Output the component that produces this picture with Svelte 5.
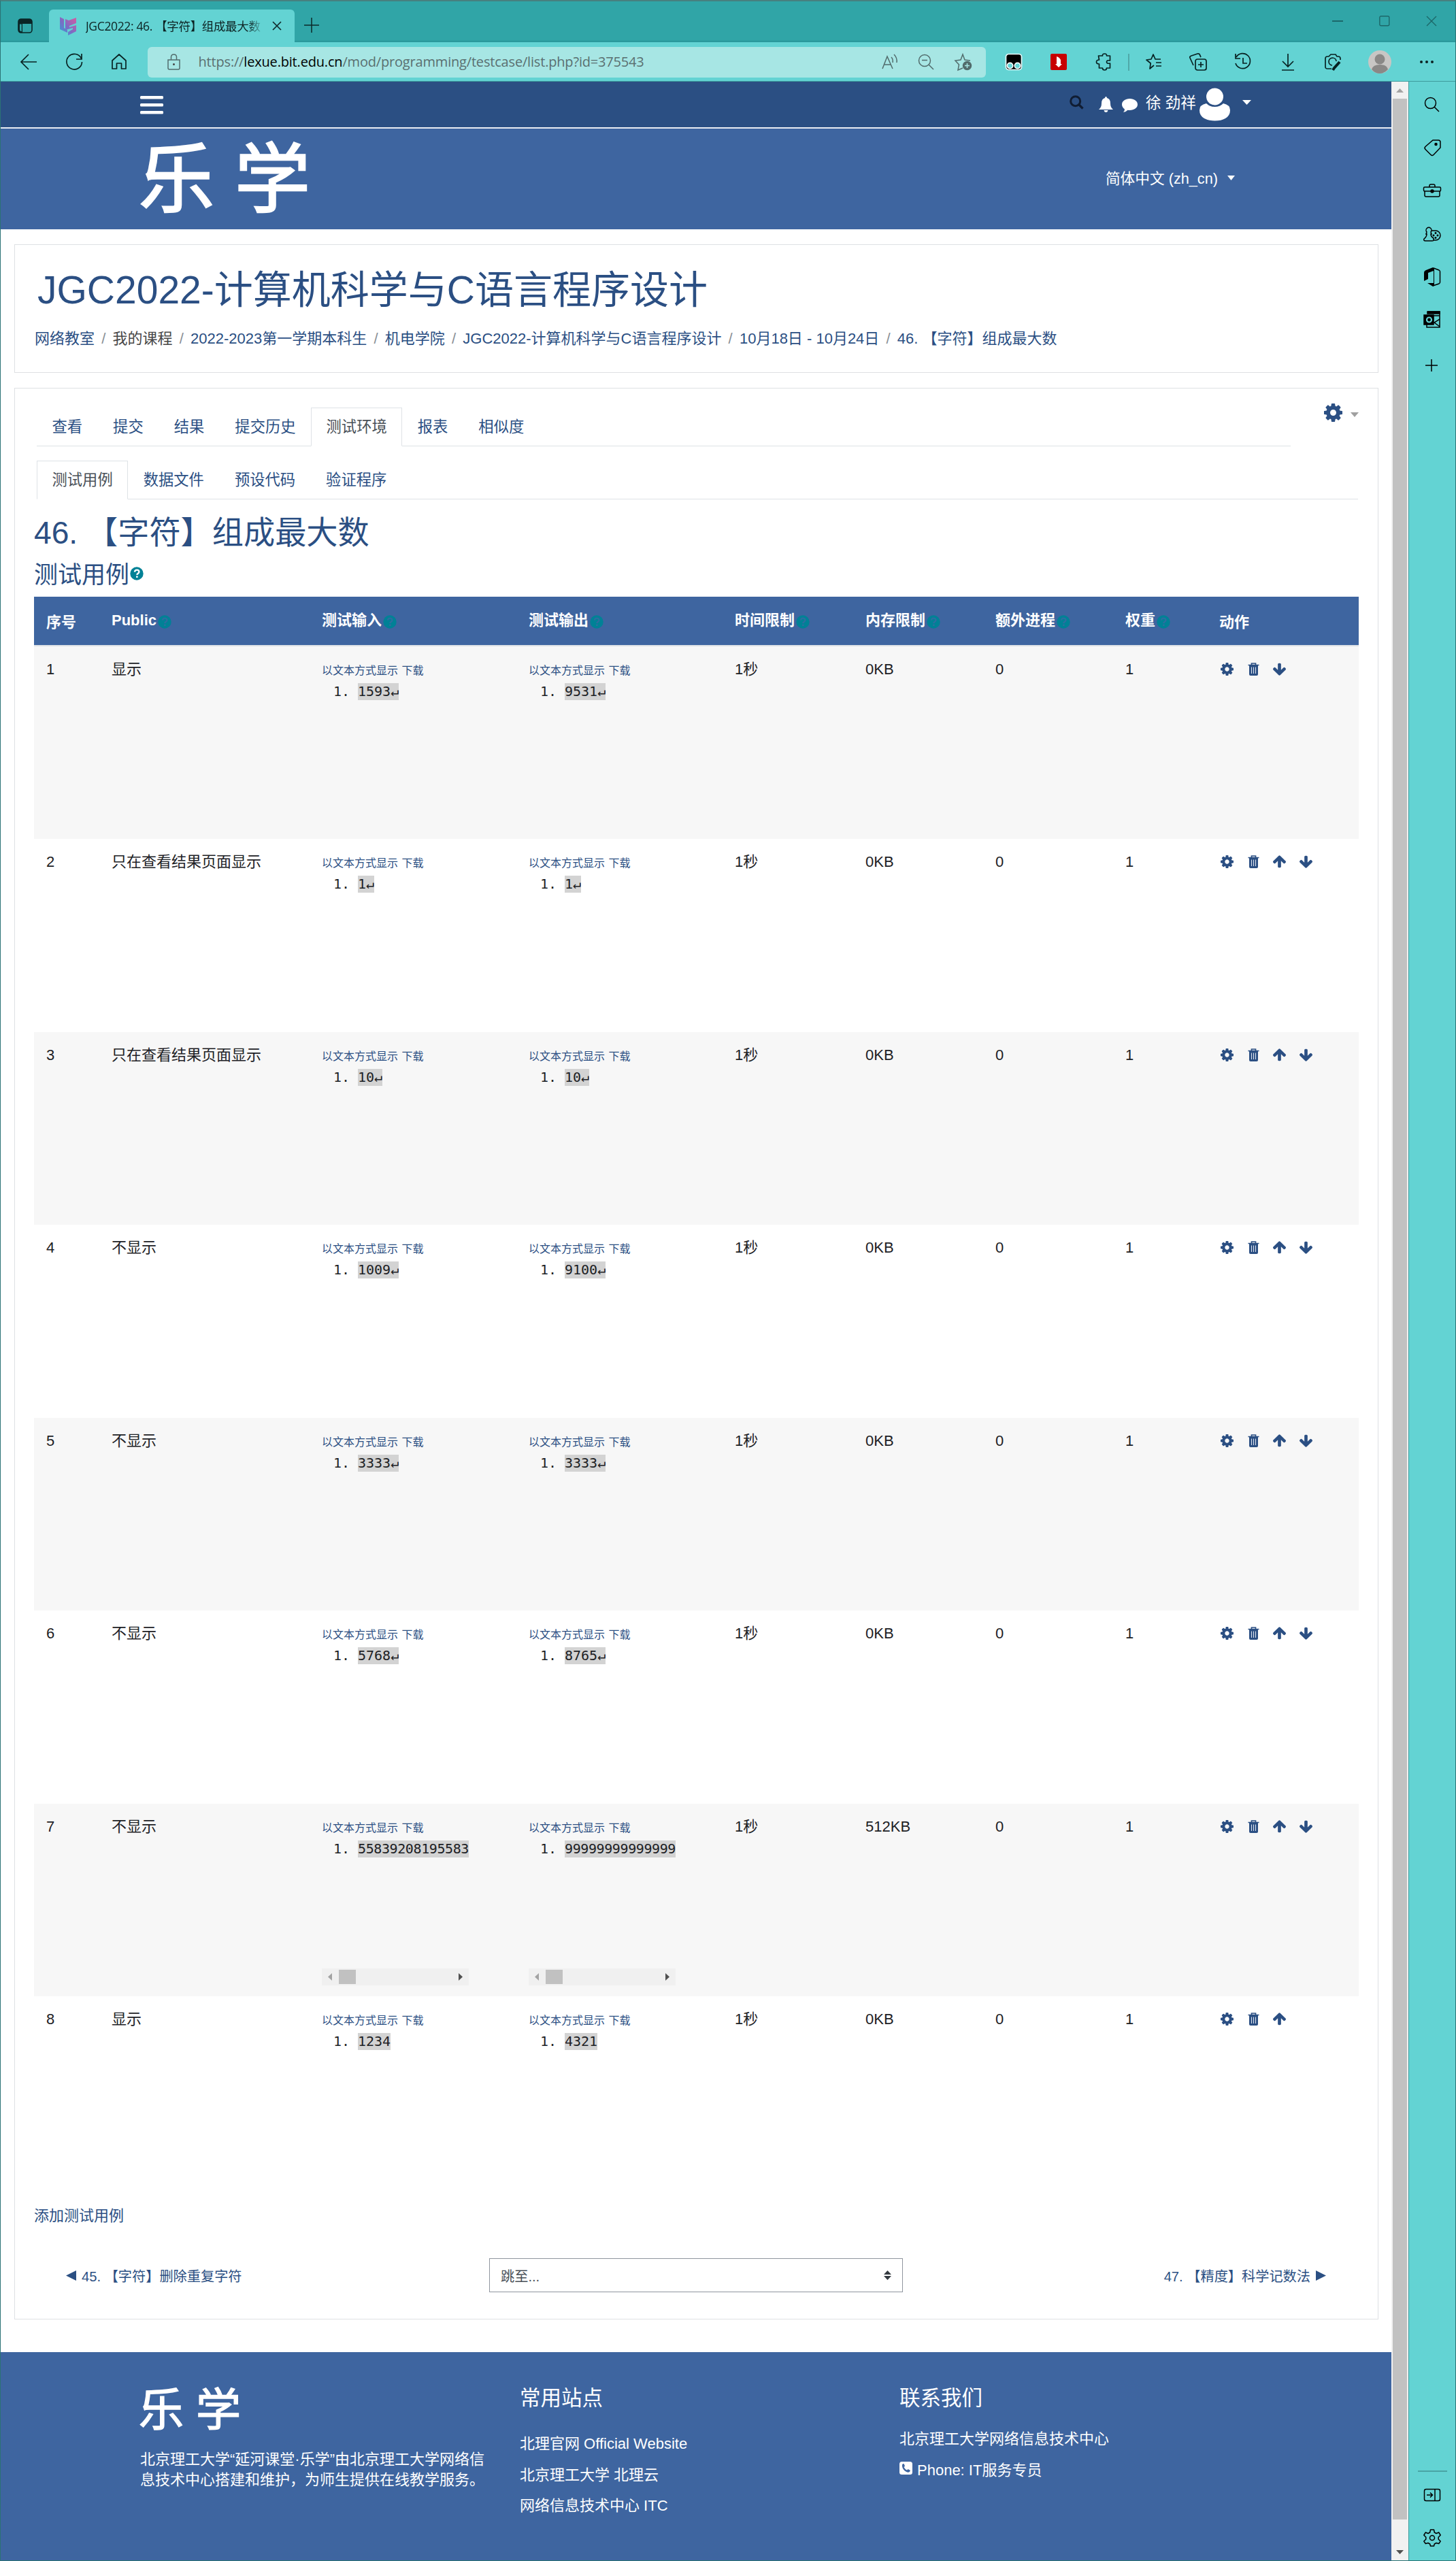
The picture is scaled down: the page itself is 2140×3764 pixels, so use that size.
<script>
  const breadcrumbs = [
    '网络教室', '我的课程', '2022-2023第一学期本科生', '机电学院',
    'JGC2022-计算机科学与C语言程序设计', '10月18日 - 10月24日', '46. 【字符】组成最大数'
  ];
  const mainTabs = ['查看', '提交', '结果', '提交历史', '测试环境', '报表', '相似度'];
  const subTabs = ['测试用例', '数据文件', '预设代码', '验证程序'];
  const columns = [
    ['序号', false], ['Public', true], ['测试输入', true], ['测试输出', true], ['时间限制', true],
    ['内存限制', true], ['额外进程', true], ['权重', true], ['动作', false]
  ];
  const rows = [
    { vis: '显示', input: '1593↵', output: '9531↵', mem: '0KB' },
    { vis: '只在查看结果页面显示', input: '1↵', output: '1↵', mem: '0KB' },
    { vis: '只在查看结果页面显示', input: '10↵', output: '10↵', mem: '0KB' },
    { vis: '不显示', input: '1009↵', output: '9100↵', mem: '0KB' },
    { vis: '不显示', input: '3333↵', output: '3333↵', mem: '0KB' },
    { vis: '不显示', input: '5768↵', output: '8765↵', mem: '0KB' },
    { vis: '不显示', input: '55839208195583', output: '99999999999999', mem: '512KB', scroll: true },
    { vis: '显示', input: '1234', output: '4321', mem: '0KB' }
  ];
</script>

{#snippet cog(size)}
  <svg width={size} height={size} viewBox="0 -128 1536 1536" fill="currentColor"><path d="M1024 640q0-106-75-181t-181-75-181 75-75 181 75 181 181 75 181-75 75-181zm512-109v222q0 12-8 23t-20 13l-185 28q-19 54-39 91 35 50 107 138 10 12 10 25t-9 23q-27 37-99 108t-94 71q-12 0-26-9l-138-108q-44 23-91 38-16 136-29 186-7 28-36 28h-222q-14 0-24.500-8.500t-11.500-21.500l-28-184q-49-16-90-37l-141 107q-10 9-25 9-14 0-25-11-126-114-165-168-7-10-7-23 0-12 8-23 15-21 51-66.500t54-70.500q-27-50-41-99l-183-27q-13-2-21-12.500t-8-23.500v-222q0-12 8-23t19-13l186-28q14-46 39-92-40-57-107-138-10-12-10-24 0-10 9-23 26-36 98.500-107.500t94.500-71.500q13 0 26 10l138 107q44-23 91-38 16-136 29-186 7-28 36-28h222q14 0 24.500 8.500t11.500 21.500l28 184q49 16 90 37l142-107q9-9 24-9 13 0 25 10 129 119 165 170 7 8 7 22 0 12-8 23-15 21-51 66.500t-54 70.500q26 50 41 98l183 28q13 2 21 12.500t8 23.500z" /></svg>
{/snippet}
{#snippet arrow(up)}
  <svg class:up width="19" height="19" viewBox="53 90 1558 1520" fill="currentColor"><path d="M1611 832q0 53-37 90l-651 652q-39 37-91 37-53 0-90-37l-651-652q-38-36-38-90 0-53 38-91l74-75q39-37 91-37 53 0 90 37l294 294v-704q0-52 38-90t90-38h128q52 0 90 38t38 90v704l294-294q37-37 90-37 52 0 91 37l75 75q37 39 37 91z" /></svg>
{/snippet}
{#snippet help()}
  <svg class="help" width="20" height="20" viewBox="0 0 20 20"><circle cx="10" cy="10" r="9.700" fill="#008196" /><path class="qm" d="M6.900 7.600C7.200 5.400 8.500 4.600 10.200 4.600c1.900 0 3.200 1.100 3.200 2.800 0 2.500-3 2.300-3 4.600" fill="none" stroke-width="2.400" /><rect class="qd" x="9.100" y="13.500" width="2.500" height="2.500" /></svg>
{/snippet}
{#snippet code(text, scroll)}
  <div class="code-cell">
    <div class="code-links"><a>以文本方式显示</a> <a>下载</a></div>
    <div class="code-line" class:wide={scroll}><span>1.</span><mark>{text}</mark></div>
    {#if scroll}
      <div class="hscroll">
        <svg width="25" height="25"><path d="M15 7v11l-6-5.500z" fill="#a3a3a3" /></svg>
        <i></i>
        <svg width="25" height="25"><path d="M10 7v11l6-5.500z" fill="#505050" /></svg>
      </div>
    {/if}
  </div>
{/snippet}

<div class="window">
  <div class="tabstrip">
    <svg class="ws" width="22" height="22" viewBox="0 0 22 22"><rect x="1" y="1" width="20" height="20" rx="4" fill="none" stroke="#0a2425" stroke-width="1.600" /><path d="M1 8V5q0-4 4-4h12q4 0 4 4v3H7v13H5q-4 0-4-4z" fill="#0a2425" /><path d="M3 8.500h2.800v10.800q-2.800 0-2.800-3z" fill="#30a5a7" /></svg>
    <div class="tab">
      <svg width="25" height="26" viewBox="0 0 25 26"><defs><linearGradient id="fav" x1="0" y1="1" x2="1" y2="0"><stop offset="0" stop-color="#28a6d8" /><stop offset=".45" stop-color="#7c6bc4" /><stop offset="1" stop-color="#d85aa0" /></linearGradient></defs><path d="M0 0l6 3v13l5 3v4L0 18zM8 3l5 2 11-4v8l-10 4v2l10-3v9l-12 6v-5l7-4v-2l-11 3z" fill="url(#fav)" /></svg>
      <span class="tab-title">JGC2022: 46. 【字符】组成最大数</span>
      <svg width="14" height="14"><path d="M1 1l12 12M13 1L1 13" stroke="#102a2b" stroke-width="1.700" /></svg>
    </div>
    <svg class="newtab" width="22" height="22"><path d="M11 0v22M0 11h22" stroke="#0b2829" stroke-width="1.500" /></svg>
    <div class="controls">
      <svg width="16" height="16"><path d="M0 8h16" stroke="#17595b" stroke-width="1.600" /></svg>
      <svg width="16" height="16"><rect x=".8" y=".8" width="14" height="14" rx="2" fill="none" stroke="#1c6769" stroke-width="1.400" /></svg>
      <svg width="16" height="16"><path d="M1 1l14 14M15 1L1 15" stroke="#1c6769" stroke-width="1.400" /></svg>
    </div>
  </div>

  <div class="toolbar">
    <svg class="nav" viewBox="0 0 24 24"><path d="M24 12H1M12 1L1 12l11 11" /></svg>
    <svg class="nav" viewBox="0 0 24 24"><path d="M22.500 7A11.300 11.300 0 1 0 23.500 12M23 0v8h-8" /></svg>
    <svg class="nav" viewBox="0 0 24 24"><path d="M2 10L12 1l10 9v12h-6.500v-8h-7v8H2z" stroke-linejoin="round" /></svg>
    <div class="address">
      <svg class="lock" width="19" height="24" viewBox="0 0 19 24"><path d="M1 9h17v12q0 2-2 2H3q-2 0-2-2zM5.500 9V5q0-4 4-4t4 4v4" fill="none" stroke="#526c6c" stroke-width="1.500" /><circle cx="9.500" cy="15.500" r="1.500" fill="#444" /></svg>
      <span class="url">https://<b>lexue.bit.edu.cn</b>/mod/programming/testcase/list.php?id=375543</span>
      <div class="addr-icons">
        <svg viewBox="0 0 24 24"><path d="M1 22L8 4l8 18M4 16h9M14 5q3 3 2 8M18 1q5 5 4 12" /></svg>
        <svg viewBox="0 0 24 24"><circle cx="10" cy="10" r="8.500" /><path d="M16 16l7 7M6 9.500h8" /></svg>
        <svg viewBox="0 0 24 24"><path d="M12 21l-7 3 1.500-8L1 10l8-1 3-8 3 8 8 1" /><circle cx="18.500" cy="17.500" r="6" fill="#526c6c" /><path d="M18.500 14v7M15 17.500h7" stroke="#a7e6e4" /></svg>
      </div>
    </div>
    <div class="tools">
      <svg viewBox="0 0 24 24"><rect x=".5" y=".5" width="23" height="23" rx="4" fill="#000" stroke="#e8fafa" /><circle cx="6.500" cy="17.500" r="4.200" fill="#63d3d3" stroke="#fff" /><circle cx="17.500" cy="17.500" r="4.200" fill="#63d3d3" stroke="#fff" /></svg>
      <svg viewBox="0 0 24 24"><rect width="24" height="24" rx="2" fill="#c80000" stroke="none" /><path d="M9 4q4 1 6 5v6h2l-5 5-5-5h2z" fill="#fff" stroke="none" /></svg>
      <svg viewBox="0 0 24 24"><path d="M3 3h6q-.5-3 3-3t3 3h5v7q-5-1-5 2t5 2v7h-5q0 3-3 3t-3-3H4v-6q-4 0-4-3t4-3z" transform="translate(1.500 0)" stroke-linejoin="round" /></svg>
      <i class="sep"></i>
      <svg viewBox="0 0 24 24"><path d="M13 17l-6 5 1.200-8L2 9l7-1 3-7 3 7h8M16 13h8M16 18h8" stroke-linejoin="round" /></svg>
      <svg viewBox="0 0 24 24"><rect x="8" y="8" width="16" height="16" rx="3" /><path d="M16 12v8M12 16h8M5 17L0 6q-1-2 2-3l9-3q3-1 4 3l1 2" /></svg>
      <svg viewBox="0 0 24 24"><path d="M2 5a11 11 0 1 1-1 9M1 0v7h7M12 6v8h6" /></svg>
      <svg viewBox="0 0 24 24"><path d="M12 0v19M4 11l8 8 8-8M3 24h18" /></svg>
      <svg viewBox="0 0 24 24"><path d="M10 22H4q-3 0-3-3V7q0-3 3-3h2l3-3h7l2 3h2q3 0 3 3v2M11 17a5.500 5.500 0 1 1 6-6" /><path d="M22 12l-8 9-2 3" stroke-width="4" /></svg>
      <svg class="me" viewBox="0 0 34 34"><circle cx="17" cy="17" r="17" fill="#c8c6c4" stroke="none" /><circle cx="17" cy="13" r="7.500" fill="#8a8886" stroke="none" /><path d="M5 28q2-7 12-7t12 7q-5 6-12 6T5 28" fill="#8a8886" stroke="none" /></svg>
      <svg viewBox="0 0 24 24"><g fill="#0b2222" stroke="none"><circle cx="4" cy="12" r="2" /><circle cx="12" cy="12" r="2" /><circle cx="20" cy="12" r="2" /></g></svg>
    </div>
  </div>

  <div class="body">
    <div class="page">
      <nav class="topnav">
        <svg width="34" height="27"><g fill="#fff"><rect width="34" height="4.500" rx="1.500" /><rect y="11" width="34" height="4.500" rx="1.500" /><rect y="22" width="34" height="4.500" rx="1.500" /></g></svg>
        <div class="user">
          <svg class="find" width="21" height="21"><circle cx="8.700" cy="8.700" r="7" fill="none" stroke="#101d33" stroke-width="3" /><path d="M13.500 13.500l6 6" stroke="#101d33" stroke-width="3.200" /></svg>
          <svg class="bell" width="21" height="23"><path d="M10.500 0q1.500 0 1.500 2 5 1 5 8 0 6 4 9H0q4-3 4-9 0-7 5-8 0-2 1.500-2zM7.500 20h6q-.5 3-3 3t-3-3z" fill="#fff" /></svg>
          <svg class="chat" width="23" height="20"><path d="M11.500 0C18 0 23 3.600 23 8.500S18 17 11.500 17q-1.500 0-3-.3Q6 19.500 2 20q2-2 2-4.500-4-3-4-7C0 3.600 5 0 11.500 0z" fill="#fff" /></svg>
          <span>徐 劲祥</span>
          <svg class="face" width="46" height="48"><circle cx="22.500" cy="12" r="12.500" fill="#fff" /><path d="M10 22q5 5 12.500 5T35 22q10 2 10 10 0 8-7 12-6 3.500-15.500 3.500T7 44q-7-4-7-12 0-8 10-10z" fill="#fff" /></svg>
          <svg class="caret" width="13" height="7"><path d="M0 0h13l-6.500 7z" fill="#fff" /></svg>
        </div>
      </nav>
      <header class="banner">
        <div class="logo">乐<span>学</span></div>
        <div class="lang">简体中文 (zh_cn)<svg width="11" height="7"><path d="M0 0h11l-5.500 7z" fill="#fff" /></svg></div>
      </header>

      <section class="card course">
        <h1>JGC2022-计算机科学与C语言程序设计</h1>
        <ol>
          {#each breadcrumbs as crumb, i}
            <li class:plain={i === 1}>{crumb}</li>
          {/each}
        </ol>
      </section>

      <section class="card main">
        <div class="tabs-row">
          <ul class="tabs">
            {#each mainTabs as t, i}<li class:active={i === 4}>{t}</li>{/each}
          </ul>
          <div class="settings">{@render cog(27)}<svg width="12" height="7"><path d="M0 0h12L6 7z" fill="#a0a0a0" /></svg></div>
        </div>
        <ul class="tabs sub">
          {#each subTabs as t, i}<li class:active={i === 0}>{t}</li>{/each}
        </ul>
        <h2>46. 【字符】组成最大数</h2>
        <h3>测试用例{@render help()}</h3>

        <div class="table">
          <div class="tr head">
            {#each columns as [label, hasHelp]}
              <div class:low={!hasHelp}>{label}{#if hasHelp}{@render help()}{/if}</div>
            {/each}
          </div>
          {#each rows as r, i}
            <div class="tr">
              <div>{i + 1}</div>
              <div>{r.vis}</div>
              {@render code(r.input, r.scroll)}
              {@render code(r.output, r.scroll)}
              <div>1秒</div>
              <div>{r.mem}</div>
              <div>0</div>
              <div>1</div>
              <div class="actions">
                {@render cog(19)}
                <svg width="19" height="19"><path d="M1.500 3.500h16M6.500 3V1h6v2" fill="none" stroke="currentColor" stroke-width="1.700" /><path d="M3 4h13v13q0 2-2 2H5q-2 0-2-2z" fill="currentColor" /><path d="M6.500 6.500v9.500M9.500 6.500v9.500M12.500 6.500v9.500" stroke="#dce3ee" stroke-width="1.100" /></svg>
                {#if i > 0}{@render arrow(true)}{/if}
                {#if i < rows.length - 1}{@render arrow(false)}{/if}
              </div>
            </div>
          {/each}
        </div>

        <a class="add">添加测试用例</a>
        <div class="pager">
          <a><svg width="15" height="15"><path d="M15 0v15L0 7.500z" fill="currentColor" /></svg><span>45. 【字符】删除重复字符</span></a>
          <div class="select"><span>跳至...</span><svg width="11" height="14"><path d="M0 6l5.500-6L11 6zM0 8h11l-5.500 6z" fill="#343a40" /></svg></div>
          <a><span>47. 【精度】科学记数法</span><svg width="15" height="15"><path d="M0 0v15l15-7.500z" fill="currentColor" /></svg></a>
        </div>
      </section>

      <footer>
        <div class="f1">
          <div class="logo small">乐<span>学</span></div>
          <p>北京理工大学“延河课堂·乐学”由北京理工大学网络信<br />息技术中心搭建和维护，为师生提供在线教学服务。</p>
        </div>
        <div class="f2">
          <h5>常用站点</h5>
          <a>北理官网 Official Website</a>
          <a>北京理工大学 北理云</a>
          <a>网络信息技术中心 ITC</a>
        </div>
        <div class="f3">
          <h5>联系我们</h5>
          <a>北京理工大学网络信息技术中心</a>
          <a><svg width="19" height="19"><rect width="19" height="19" rx="3.500" fill="#fff" /><path d="M4 4.500q2-2.500 3-.5l1 2.500-1.500 1.500q1.500 3 4.500 4.500l1.500-1.500 3 1.500q1 1-1 2.700-3 1.500-7-2T4 4.500z" fill="#3e65a0" /></svg>Phone: IT服务专员</a>
        </div>
      </footer>
    </div>

    <div class="vscroll">
      <svg width="25" height="25"><path d="M7 16h11l-5.500-6z" fill="#a3a3a3" /></svg>
      <i></i>
      <svg class="dn" width="25" height="25"><path d="M7 10h11l-5.500 6z" fill="#505050" /></svg>
    </div>

    <aside>
      <svg viewBox="0 0 26 26"><circle cx="10.500" cy="10.500" r="8" /><path d="M16 16l7 7" /></svg>
      <svg viewBox="0 0 26 26"><path d="M14 2h8q3 0 3 3v8L15 23.500q-2 2-4 0l-8-8q-2-2 0-4z" /><circle cx="18.500" cy="8" r="1.500" fill="#000" /></svg>
      <svg viewBox="0 0 26 26"><rect x=".5" y="7" width="25" height="6" rx="1.500" /><path d="M2 13v6q0 2 2 2h18q2 0 2-2v-6M9 7V5q0-2 2-2h4q2 0 2 2v2" /><circle cx="13" cy="13" r="2" fill="#000" /></svg>
      <svg viewBox="0 0 26 26"><path d="M5 10a4 4 0 1 1 6 0l1 3h-1q0 4 4 6v3q0 1-2 1H3q-3 0-2-3 4-3 4-7H4zM12 8h6a7 7 0 0 1 0 14h-3" /><g fill="#000" stroke-width=".6"><circle cx="18" cy="11.500" r="1.200" /><circle cx="15" cy="15" r="1.200" /><circle cx="21" cy="15" r="1.200" /><circle cx="18" cy="18.500" r="1.200" /></g></svg>
      <svg viewBox="0 0 26 26"><path d="M14 -1L4 3Q1 4 1 7v12l6-3V7l8-3v18H6l8 5 2-1V0z" fill="#000" stroke="none" /><path d="M15 0l8 3q1.500 1 1.500 2v16q0 1-1.500 2l-9 3" /></svg>
      <svg viewBox="0 0 26 26"><path d="M6 1h18v11M15 7h9M5 20v4h19V12l-8 5 8 6" /><path d="M6 1h18v3H6zM1 6h14v14H1z" fill="#000" /><circle cx="8.500" cy="13" r="3.500" fill="#000" stroke="#63d3d3" stroke-width="2.200" /></svg>
      <svg class="plus" viewBox="0 0 26 26"><path d="M12 4v18M3 13h18" /></svg>
      <i></i>
      <svg viewBox="0 0 26 26"><rect x="1.500" y="4.500" width="23" height="17" rx="2.500" /><path d="M17 5v16M5 13h8M10 9.500l3.500 3.500-3.500 3.500" /></svg>
      <svg class="gear" viewBox="0 0 26 26"><path d="M10.500 1h5l.8 4 2.700 1.500 3.700-1.500 2.500 4-3 3v3l3 3-2.500 3.500-3.700-1-2.700 1.500-.8 3h-5l-.8-3L7 20.500l-3.700 1L.8 18l3-3v-3l-3-3 2.500-4L7 6.500 9.700 5z" stroke-linejoin="round" /><circle cx="13" cy="13" r="3.500" /></svg>
    </aside>
  </div>
</div>

<style>
  :global(body) { margin: 0; background: #fff; }
  .window {
    box-sizing: border-box; width: 2140px; height: 3764px; overflow: hidden;
    display: flex; flex-direction: column;
    border: 1px solid #2b7375; border-top: 2px solid #47807f;
    font-family: "Liberation Sans", "Noto Sans CJK SC", sans-serif;
    font-size: 22.5px; color: #1d2125; background: #fff;
  }
  .window * { box-sizing: border-box; }
  svg { flex: none; display: block; overflow: visible; }
  ul, ol, p, h1, h2, h3, h5 { margin: 0; padding: 0; list-style: none; font-weight: 400; }

  .tabstrip { display: flex; height: 60px; flex: none; background: #30a5a7; box-shadow: inset 0 -2px 2px #2b979a; }
  .ws { margin: 25px 24px 0 25px; }
  .tab { width: 361px; margin-top: 12px; padding: 0 18px 0 16px; border-radius: 6px 6px 0 0; background: #63d3d3; display: flex; align-items: center; }
  .tab-title {
    flex: none; width: 261px; margin: 0 13px 0 13px; overflow: hidden; white-space: nowrap;
    font: 17.500px/28px "Open Sans", "Noto Sans CJK SC", sans-serif; letter-spacing: -0.35px; color: #0d2323;
    -webkit-mask-image: linear-gradient(90deg, #000 92%, transparent);
    mask-image: linear-gradient(90deg, #000 92%, transparent);
  }
  .newtab { margin: 24px 0 0 14px; }
  .controls { margin-left: auto; display: flex; margin-right: 1px; }
  .controls svg { margin: 21px 26.500px 0; }

  .toolbar { display: flex; align-items: center; height: 58px; flex: none; padding-left: 29px; background: #63d3d3; border-bottom: 1px solid #3e9b9c; }
  .nav { width: 24px; height: 24px; margin-right: 42.500px; fill: none; stroke: #082222; stroke-width: 1.700; }
  .address { flex: none; width: 1232px; height: 45px; margin-left: -13px; margin-top: 1px; padding-left: 29px; border-radius: 6px; background: #a7e6e4; display: flex; align-items: center; }
  .url { margin-left: 27px; white-space: nowrap; font: 20px/40px "Open Sans", sans-serif; letter-spacing: -0.18px; color: #5a6f70; }
  .url b { font-weight: 400; color: #000; }
  .addr-icons { display: flex; gap: 29.500px; margin-left: auto; margin-right: 22px; }
  .addr-icons svg { width: 24px; height: 24px; fill: none; stroke: #526c6c; stroke-width: 1.500; }
  .tools { display: flex; align-items: center; margin-left: 8px; margin-top: 1px; }
  .tools svg { width: 24px; height: 24px; margin: 0 21px; fill: none; stroke: #082222; stroke-width: 1.700; }
  .tools .sep { width: 2px; height: 25px; margin: 0 2px 0 3px; background: #4fa9a9; }
  .tools .me { width: 34px; height: 34px; margin: -2px 19px; }

  .body { display: flex; flex: none; height: 3643px; }
  .page { width: 2044px; flex: none; }
  .topnav { height: 69px; border-bottom: 2px solid #e9ecf3; background: #2b4f83; display: flex; padding-left: 205px; }
  .topnav > svg { margin-top: 21px; }
  .user { display: flex; align-items: flex-start; margin-left: 1332px; color: #fff; }
  .user span { margin: 14px 0 0 12px; line-height: 36px; white-space: nowrap; }
  .find { margin-top: 20px; }
  .bell { margin: 22px 0 0 22px; }
  .chat { margin: 25px 0 0 13px; }
  .face { margin: 10px 0 0 5px; }
  .caret { margin: 27px 0 0 17px; }
  .banner { height: 148px; background: #3e65a0; display: flex; justify-content: space-between; padding: 0 230px 0 203px; color: #fff; }
  .logo { font: 111px/148px "Noto Sans CJK SC", sans-serif; -webkit-text-stroke: 2.500px #fff; white-space: nowrap; margin-top: -8px; }
  .logo span { margin-left: 30px; }
  .lang { display: flex; height: 36px; margin-top: 56px; line-height: 36px; font-size: 21.700px; }
  .lang svg { margin: 13px 0 0 14px; }

  .card { width: 2005px; margin-left: 20px; border: 1px solid #dee0e3; }
  .course { height: 189px; margin-top: 22px; padding: 26px 29px; }
  h1 { height: 80px; padding-left: 4px; line-height: 80px; font-size: 57px; color: #2b4f83; white-space: nowrap; }
  ol { display: flex; height: 36px; margin-top: 14px; line-height: 36px; font-size: 22px; color: #2b4f83; white-space: nowrap; }
  li.plain { color: #474747; }
  ol li + li::before { content: "/"; display: inline-block; padding: 0 10.200px; color: #8a9096; }

  .main { height: 2839px; margin-top: 22px; padding: 28px 28px 0 28px; color: #1d2125; }
  .tabs-row { display: flex; justify-content: space-between; margin-left: 4px; }
  .tabs { display: flex; height: 57px; width: 1843px; border-bottom: 1px solid #dee2e6; color: #2b4f83; }
  .tabs li { height: 57px; padding: 0 21.500px; border: 1px solid transparent; line-height: 56px; white-space: nowrap; font-size: 22.300px; }
  .tabs .active { color: #495057; border-color: #dee2e6 #dee2e6 #fff; background: #fff; }
  .tabs.sub { width: 1942px; margin: 21px 0 0 4px; }
  .settings { display: flex; gap: 12px; color: #2b4f83; margin-top: -6px; }
  .settings svg:last-child { margin-top: 13px; }
  h2 { height: 64px; margin-top: 17px; line-height: 64px; font-size: 46.200px; color: #2b4f83; }
  h3 { display: flex; align-items: center; height: 50px; margin-top: 1px; font-size: 35px; color: #2b4f83; }
  h3 .help { margin: 4px 0 0 1px; }
  .qm { stroke: #fff; }
  .qd { fill: #fff; }
  .head .qm { stroke: #2c6ea0; }
  .head .qd { fill: #2c6ea0; }
  .table { margin-top: 11px; width: 1947px; }
  .tr { display: grid; grid-template-columns: 96px 309px 304px 303px 192px 191px 191px 138px 222px; height: 283.430px; padding-top: 16px; }
  .tr > div { padding-left: 18px; line-height: 36px; white-space: nowrap; font-size: 22px; }
  .tr.head { height: 73px; padding-top: 17px; background: #3e65a0; border-bottom: 2px solid #dee2e6; color: #fff; }
  .tr.head > div { display: flex; height: 36px; align-items: center; font-weight: 700; }
  .tr.head > .low { padding-top: 6px; }
  .head .help { margin: 3px 0 0 2px; }
  .tr:nth-child(even) { background: #f7f7f7; }
  .tr > .code-cell { height: 252px; width: 234px; padding-top: 1px; display: flex; flex-direction: column; }
  .code-links { height: 37px; line-height: 38px; font-size: 16px; color: #2b4f83; }
  .code-links a + a { margin-left: 1px; }
  .code-line { display: flex; font: 20px/25px "DejaVu Sans Mono", monospace; }
  .code-line span { flex: none; width: 53px; padding-left: 17px; }
  .code-line mark { background: #d3d3d3; color: inherit; }
  .wide mark { width: 163px; letter-spacing: -0.4px; }
  .hscroll { width: 216px; height: 25px; margin-top: 163px; background: #f0f0f0; display: flex; }
  .hscroll i { width: 25px; height: 21px; margin: 2px auto 0 0; background: #c1c1c1; }
  .tr > .actions { display: flex; gap: 19.500px; padding-left: 20px; padding-top: 8px; color: #2b4f83; }
  .up { transform: rotate(180deg); }

  .add { display: block; margin-top: 22px; height: 36px; line-height: 36px; font-size: 22px; color: #2b4f83; }
  .pager { display: grid; grid-template-columns: 669px 608px 1fr; height: 50px; margin-top: 44px; align-items: center; font-size: 20.200px; color: #2b4f83; }
  .pager a { display: flex; align-items: center; gap: 8px; padding-left: 47px; white-space: nowrap; }
  .pager a:last-child { justify-content: flex-end; padding: 0 48px 0 0; }
  .select { height: 50px; border: 1px solid #8f959e; display: flex; align-items: center; justify-content: space-between; padding: 0 16px; color: #495057; }

  footer { height: 306px; margin-top: 48px; background: #3e65a0; color: #fff; display: flex; padding-left: 205px; }
  footer > div { width: 558px; white-space: nowrap; font-size: 22px; }
  .logo.small { margin: 39px 0 0 -2px; font-size: 66px; line-height: 80px; -webkit-text-stroke-width: 1.500px; }
  .small span { margin-left: 18px; }
  p { line-height: 30px; margin-top: 24px; }
  h5 { height: 44px; margin-top: 45px; line-height: 44px; font-size: 30.500px; }
  footer a { display: flex; align-items: center; height: 36px; margin-bottom: 9.500px; }
  .f2 a:nth-child(2) { margin-top: 25px; }
  .f3 a:nth-child(2) { margin-top: 18px; }
  footer a svg { margin-right: 7px; }

  .vscroll { width: 26px; flex: none; display: flex; flex-direction: column; background: #f1f1f1; border-right: 1px solid #3e9b9c; }
  .vscroll i { width: 21px; height: 3558px; margin-left: 2px; background: #c1c1c1; }
  .dn { margin-top: 35px; }
  aside { flex: 1; display: flex; flex-direction: column; align-items: center; background: #63d3d3; padding-top: 21px; }
  aside svg { width: 26px; height: 26px; margin-bottom: 37.300px; fill: none; stroke: #000; stroke-width: 1.500; }
  aside .plus { margin-top: 3px; }
  aside i { width: 43px; height: 2px; margin-top: auto; margin-bottom: 21px; background: #4aa5a5; }
  aside .gear { margin-bottom: 20px; }
</style>
